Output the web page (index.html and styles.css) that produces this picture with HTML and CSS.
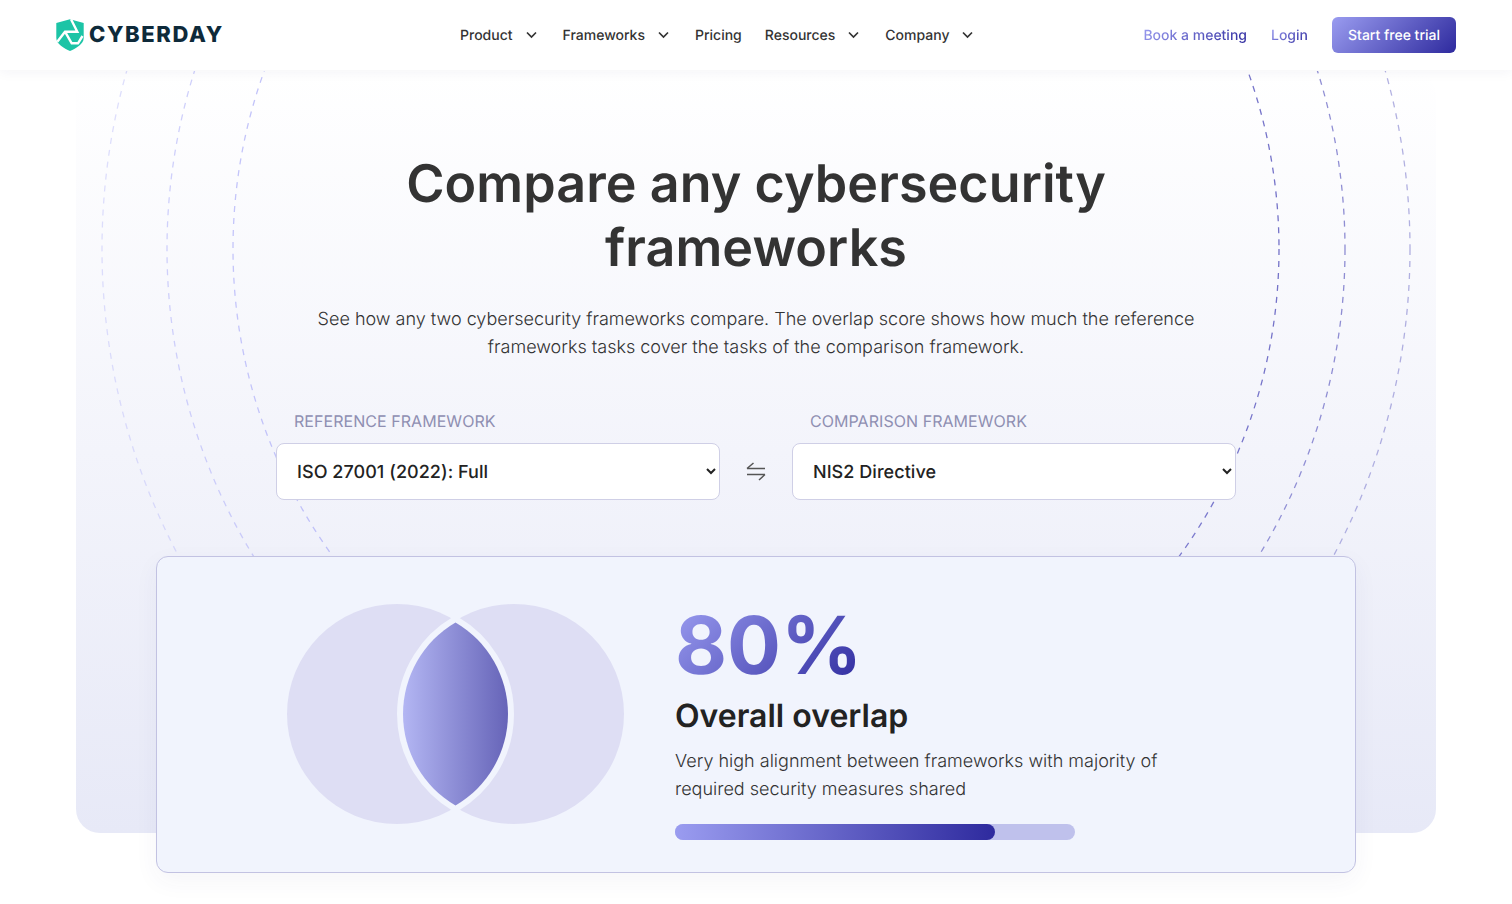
FILE: index.html
```html
<!DOCTYPE html>
<html lang="en">
<head>
<meta charset="utf-8">
<title>Compare cybersecurity frameworks</title>
<link rel="stylesheet" href="styles.css">
</head>
<body>
<svg class="defs" width="0" height="0" aria-hidden="true">
  <defs>
    <linearGradient id="ringGrad" x1="0" y1="0" x2="1" y2="0">
      <stop offset="0" stop-color="#c4c5fa"/>
      <stop offset="0.5" stop-color="#a9aaf0"/>
      <stop offset="1" stop-color="#7472c8"/>
    </linearGradient>
    <linearGradient id="lensGrad" gradientUnits="userSpaceOnUse" x1="116" y1="0" x2="221" y2="0">
      <stop offset="0" stop-color="#b3b6f3"/>
      <stop offset="1" stop-color="#6664b8"/>
    </linearGradient>
  </defs>
</svg>
<header class="nav">
  <a class="logo" href="#">
    <svg class="logo-mark" width="28" height="32" viewBox="0 0 28 32">
      <path d="M0.3 4 L14 0.3 L27.7 4 V19 C27.7 25 20 29.5 14 32 C8 29.5 0.3 25 0.3 19 Z" fill="#1cc4a6"/>
      <path d="M15 0.3 L21.3 12.7 H9 L1.3 22.7 M9 12.7 L15.7 24.3 H22 L26.5 17" fill="none" stroke="#fff" stroke-width="2.4"/>
    </svg>
    <span class="logo-text">CYBERDAY</span>
  </a>
  <nav class="menu">
    <a class="menu-item" href="#">Product <svg class="chev" width="19" height="8" viewBox="-4.5 0 19 8"><path d="M1.5 1.5 L6 6 L10.5 1.5"/></svg></a>
    <a class="menu-item" href="#">Frameworks <svg class="chev" width="19" height="8" viewBox="-4.5 0 19 8"><path d="M1.5 1.5 L6 6 L10.5 1.5"/></svg></a>
    <a class="menu-item" href="#">Pricing</a>
    <a class="menu-item" href="#">Resources <svg class="chev" width="19" height="8" viewBox="-4.5 0 19 8"><path d="M1.5 1.5 L6 6 L10.5 1.5"/></svg></a>
    <a class="menu-item" href="#">Company <svg class="chev" width="19" height="8" viewBox="-4.5 0 19 8"><path d="M1.5 1.5 L6 6 L10.5 1.5"/></svg></a>
  </nav>
  <div class="actions">
    <a class="grad-link" href="#">Book a meeting</a>
    <a class="grad-link" href="#">Login</a>
    <a class="cta" href="#">Start free trial</a>
  </div>
</header>
<main class="hero">
  <div class="rings" aria-hidden="true">
    <svg width="1360" height="486" viewBox="0 0 1360 486">
      <circle class="ring ring-a" cx="680" cy="178" r="523"/>
      <circle class="ring ring-b" cx="680" cy="178" r="589"/>
      <circle class="ring ring-c" cx="680" cy="178" r="654"/>
    </svg>
  </div>
  <h1 class="title">Compare any cybersecurity<br>frameworks</h1>
  <p class="lead">See how any two cybersecurity frameworks compare. The overlap score shows how much the reference frameworks tasks cover the tasks of the comparison framework.</p>
  <div class="picker">
    <div class="field">
      <label class="field-label" for="ref">Reference framework</label>
      <select class="select" id="ref"><option>ISO 27001 (2022): Full</option></select>
    </div>
    <div class="swap">
      <svg width="22" height="22" viewBox="0 0 22 22"><path d="M2 7.5 H20 M2 7.5 L8.5 2 M20 13.5 H2 M20 13.5 L14 19"/></svg>
    </div>
    <div class="field">
      <label class="field-label" for="cmp">Comparison framework</label>
      <select class="select" id="cmp"><option>NIS2 Directive</option></select>
    </div>
  </div>
  <section class="card">
    <svg class="venn" width="337" height="220" viewBox="0 0 337 220">
      <circle cx="110" cy="110" r="110" fill="#dedef4"/>
      <circle cx="227" cy="110" r="110" fill="#dedef4"/>
      <path class="lens" d="M168.5 18.5 A106 106 0 0 1 168.5 201.5 A106 106 0 0 1 168.5 18.5 Z" fill="url(#lensGrad)"/>
    </svg>
    <div class="score">
      <div class="percent">80%</div>
      <h2 class="score-title">Overall overlap</h2>
      <p class="score-text">Very high alignment between frameworks with majority of required security measures shared</p>
      <div class="bar"><div class="bar-fill" style="width:80%"></div></div>
    </div>
  </section>
</main>
</body>
</html>
```
FILE: styles.css
```css
* { box-sizing: border-box; }
html, body { margin: 0; padding: 0; }
body {
  font-family: Inter, "Liberation Sans", sans-serif;
  background: #fff;
  color: #333;
  height: 904px;
  overflow: hidden;
  text-rendering: geometricPrecision;
}
a { text-decoration: none; color: inherit; }
.defs { position: absolute; }
.nav {
  position: relative;
  z-index: 5;
  height: 70px;
  background: #fff;
  box-shadow: 0 2px 12px rgba(40, 40, 90, 0.05);
  display: flex;
  align-items: center;
  padding: 0 56px;
}
.logo { display: flex; align-items: center; gap: 5px; width: 404px; }
.logo-mark { display: block; }
.logo-text {
  font-family: Inter, sans-serif;
  font-weight: 800;
  font-size: 22px;
  letter-spacing: 1.6px;
  color: #0e2a3a;
}
.menu { display: flex; align-items: center; gap: 23px; }
.menu-item {
  font-size: 14px;
  font-weight: 500;
  color: #333;
  display: flex;
  align-items: center;
  gap: 8px;
}
.chev { display: block; fill: none; stroke: #333; stroke-width: 1.7; }
.actions { margin-left: auto; display: flex; align-items: center; gap: 24px; }
.grad-link {
  font-size: 14px;
  font-weight: 500;
  background: linear-gradient(135deg, #9a9cf0, #2e2a9e);
  -webkit-background-clip: text;
  background-clip: text;
  color: transparent;
}
.cta {
  width: 124px;
  height: 36px;
  display: flex;
  align-items: center;
  justify-content: center;
  border-radius: 6px;
  font-size: 14px;
  font-weight: 500;
  color: #fff;
  background: linear-gradient(135deg, #9a9cf0, #2e2a9e);
}
.hero {
  position: relative;
  margin: 1px 76px 0;
  height: 762px;
  border-radius: 24px;
  background: linear-gradient(180deg, #ffffff 0%, #e7e9f7 100%);
  display: flex;
  flex-direction: column;
  align-items: center;
  padding-top: 81px;
}
.rings {
  position: absolute;
  left: 0;
  right: 0;
  top: 0;
  height: 486px;
  overflow: hidden;
}
.ring { fill: none; stroke: url(#ringGrad); stroke-width: 1.3; stroke-dasharray: 6 6; }
.ring-a { opacity: 1; }
.ring-b { opacity: 0.8; }
.ring-c { opacity: 0.55; }
.title {
  position: relative;
  margin: 0;
  font-size: 52px;
  line-height: 64px;
  font-weight: 600;
  letter-spacing: 0.08px;
  color: #333;
  text-align: center;
}
.lead {
  position: relative;
  margin: 26px 0 0;
  width: 900px;
  font-size: 18px;
  line-height: 28px;
  font-weight: 300;
  color: #333;
  text-align: center;
}
.picker {
  position: relative;
  margin-top: 49px;
  width: 960px;
  display: flex;
  align-items: flex-end;
}
.field { flex: 1; display: flex; flex-direction: column; }
.field-label {
  font-size: 16px;
  line-height: 20px;
  text-transform: uppercase;
  letter-spacing: 0.05px;
  color: #8f8fb2;
  padding-left: 18px;
  margin-bottom: 12px;
}
.select {
  height: 57px;
  width: 100%;
  padding: 2px 8px 0 16px;
  border: 1px solid #cfcfe6;
  border-radius: 8px;
  background-color: #fff;
  font-family: inherit;
  font-size: 18px;
  font-weight: 450;
  letter-spacing: 0.05px;
  color: #222;
  text-rendering: geometricPrecision;
}
.swap { width: 72px; height: 57px; display: flex; align-items: center; justify-content: center; }
.swap svg { fill: none; stroke: #555; stroke-width: 1.5; }
.card {
  position: relative;
  margin-top: 56px;
  width: 1200px;
  height: 317px;
  flex: none;
  border: 1px solid #c2c2e2;
  border-radius: 12px;
  background: #f1f4fd;
  box-shadow: 0 8px 24px rgba(60, 60, 120, 0.05);
  display: flex;
  align-items: flex-start;
  gap: 51px;
  padding: 47px 0 0 130px;
}
.venn { display: block; flex: none; }
.lens { stroke: #f1f4fd; stroke-width: 12; paint-order: stroke; stroke-linejoin: bevel; }
.score { width: 500px; margin-top: 2px; }
.percent {
  width: max-content;
  font-size: 80px;
  line-height: 80px;
  font-weight: 700;
  background: linear-gradient(135deg, #9a9cf0, #2e2a9e);
  -webkit-background-clip: text;
  background-clip: text;
  color: transparent;
}
.score-title { margin: 10px 0 0; font-size: 32px; line-height: 40px; font-weight: 600; color: #222; }
.score-text { margin: 12px 0 0; font-size: 18px; line-height: 28px; font-weight: 300; color: #333; }
.bar { margin-top: 20px; width: 400px; height: 16px; border-radius: 8px; background: #bfc1ec; }
.bar-fill { height: 100%; border-radius: 8px; background: linear-gradient(90deg, #9a9cf0, #2e2a9e); }
```
